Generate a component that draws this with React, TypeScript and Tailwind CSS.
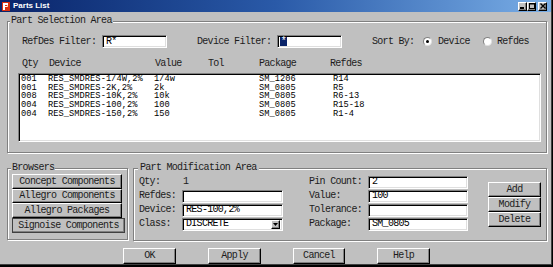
import React from "react";

const raised =
  "bg-[#c0c0c0] border border-t-white border-l-white border-b-black border-r-black shadow-[inset_-1px_-1px_0_#808080]";
const sunken =
  "bg-white border border-t-[#808080] border-l-[#808080] border-b-white border-r-white shadow-[inset_1px_1px_0_#000,inset_-1px_-1px_0_#dfdfdf]";
const etched = "border border-[#808080] shadow-[inset_1px_1px_0_#fff,1px_1px_0_#fff]";

const parts = [
  ["001", "RES_SMDRES-1/4W,2%", "1/4w", "SM_1206", "R14"],
  ["001", "RES_SMDRES-2K,2%", "2k", "SM_0805", "R5"],
  ["008", "RES_SMDRES-10K,2%", "10k", "SM_0805", "R6-13"],
  ["004", "RES_SMDRES-100,2%", "100", "SM_0805", "R15-18"],
  ["004", "RES_SMDRES-150,2%", "150", "SM_0805", "R1-4"]
];

function TitleButton({ children }: { children: React.ReactNode }) {
  return <div className={`${raised} w-[9px] h-[9px] flex items-center justify-center`}>{children}</div>;
}

function TitleBar() {
  return <div className="h-[12px] shrink-0 flex items-center bg-gradient-to-r from-[#0a246a] via-[#2a5aa8] to-[#7aaee6] pl-[2px] pr-[4px]">
      <svg width="8" height="9" viewBox="0 0 8 9" className="shrink-0">
        <rect x="0" y="0" width="8" height="9" fill="#d83010" />
        <rect x="1" y="1" width="2" height="7" fill="#fff" />
        <rect x="3" y="1" width="3" height="2" fill="#fff" />
        <rect x="5" y="3" width="1" height="2" fill="#ffd0a0" />
        <rect x="3" y="4" width="2" height="1" fill="#fff" />
      </svg>
      <span className="ml-[3px] font-['Liberation_Sans',Arial,sans-serif] text-[8px] font-bold tracking-normal text-white">
        Parts List
      </span>
      <div className="ml-auto flex items-center">
        <TitleButton>
          <svg width="5" height="5" viewBox="0 0 5 5"><rect x="0" y="3" width="4" height="2" fill="#000" /></svg>
        </TitleButton>
        <TitleButton>
          <svg width="6" height="6" viewBox="0 0 6 6"><rect x="0.5" y="0.5" width="5" height="5" fill="none" stroke="#000" /><rect x="0" y="0" width="6" height="1.5" fill="#000" /></svg>
        </TitleButton>
        <div className="ml-[2px]">
          <TitleButton>
            <svg width="6" height="6" viewBox="0 0 6 6"><path d="M0.5 0.5 L5.5 5.5 M5.5 0.5 L0.5 5.5" stroke="#000" strokeWidth="1.4" /></svg>
          </TitleButton>
        </div>
      </div>
    </div>;
}

function Radio({ checked }: { checked?: boolean }) {
  return <div className="w-[9px] h-[9px] shrink-0 rounded-full bg-white border border-t-[#808080] border-l-[#808080] border-b-[#dfdfdf] border-r-[#dfdfdf] flex items-center justify-center">
      {checked && <div className="w-[3px] h-[3px] rounded-full bg-black" />}
    </div>;
}

function Button({ label, className = "" }: { label: string; className?: string }) {
  return <div className={`${raised} flex items-center justify-center shrink-0 ${className}`}>{label}</div>;
}

function Field({ value, width, children }: { value?: string; width: string; children?: React.ReactNode }) {
  return <div className={`${sunken} ${width} h-[13px] shrink-0 flex items-center pl-[3px] text-black`}>
      {value}
      {children}
    </div>;
}

export default function App() {
  return <div className="w-[553px] h-[267px] bg-black font-['Liberation_Mono','Courier_New',monospace] text-[10px] tracking-[-0.7px] leading-none text-[#1c1c1c]">
      <div className="w-[552px] h-[265px] bg-[#c0c0c0] flex flex-col border-r border-b border-[#404040]">
        <TitleBar />
        <div className="flex flex-col pl-[7px]">
          {/* Part selection */}
          <fieldset className={`${etched} mt-[3px] w-[540px] h-[138px]`}>
            <legend className="ml-[2px] px-[1px] bg-[#c0c0c0] leading-[12px]">Part Selection Area</legend>
            <div className="flex items-center h-[13px] mt-[8px] pl-[14px]">
              <span className="w-[80px] shrink-0">RefDes Filter:</span>
              <Field value="R*" width="w-[65px]" />
              <span className="ml-[30px] w-[80px] shrink-0">Device Filter:</span>
              <div className={`${sunken} w-[65px] h-[13px] shrink-0 flex items-center pl-[2px]`}>
                <span className="bg-[#0a246a] text-white h-[9px] w-[7px] flex items-center justify-center">*</span>
              </div>
              <span className="ml-[30px] w-[51px] shrink-0">Sort By:</span>
              <Radio checked />
              <span className="ml-[6px] w-[45px] shrink-0">Device</span>
              <Radio />
              <span className="ml-[5px]">Refdes</span>
            </div>
            <div className="flex items-center h-[10px] mt-[11px] pl-[14px]">
              <span className="w-[27px] shrink-0">Qty</span>
              <span className="w-[106px] shrink-0">Device</span>
              <span className="w-[53px] shrink-0">Value</span>
              <span className="w-[51px] shrink-0">Tol</span>
              <span className="w-[71px] shrink-0">Package</span>
              <span>Refdes</span>
            </div>
            <div className={`${sunken} ml-[10px] mt-[4px] w-[523px] h-[69px] pt-[1px] pl-[2px] text-black text-[8.7px] tracking-[0.05px]`}>
              {parts.map((p, i) => <div key={i} className="flex items-center h-[8.7px]">
                  <span className="w-[27px] shrink-0">{p[0]}</span>
                  <span className="w-[106px] shrink-0">{p[1]}</span>
                  <span className="w-[105px] shrink-0">{p[2]}</span>
                  <span className="w-[74px] shrink-0">{p[3]}</span>
                  <span>{p[4]}</span>
                </div>)}
            </div>
          </fieldset>

          {/* Lower area */}
          <div className="flex mt-[9px]">
            <fieldset className={`${etched} w-[121px] h-[78px]`}>
              <legend className="ml-[3px] px-[1px] bg-[#c0c0c0] leading-[12px]">Browsers</legend>
              <div className="flex flex-col pl-[4px]">
                <Button label="Concept Components" className="w-[110px] h-[15px]" />
                <Button label="Allegro Components" className="w-[110px] h-[14px]" />
                <Button label="Allegro Packages" className="w-[110px] h-[15px]" />
                <Button label="Signoise Components" className="w-[113px] h-[15px] outline outline-1 outline-[#404040] -outline-offset-1" />
              </div>
            </fieldset>

            <fieldset className={`${etched} ml-[5px] w-[414px] h-[79px]`}>
              <legend className="ml-[4px] px-[2px] bg-[#c0c0c0] leading-[12px]">Part Modification Area</legend>
              <div className="flex pl-[5px]">
                <div className="flex flex-col mt-[1px]">
                  <div className="flex items-center h-[14px]">
                    <span className="w-[43px] shrink-0">Qty:</span>
                    <span className="pl-[1px]">1</span>
                  </div>
                  <div className="flex items-center h-[14px]">
                    <span className="w-[43px] shrink-0">Refdes:</span>
                    <Field width="w-[101px]" />
                  </div>
                  <div className="flex items-center h-[14px]">
                    <span className="w-[43px] shrink-0">Device:</span>
                    <Field value="RES-100,2%" width="w-[101px]" />
                  </div>
                  <div className="flex items-center h-[14px]">
                    <span className="w-[43px] shrink-0">Class:</span>
                    <div className={`${sunken} w-[101px] h-[13px] shrink-0 flex items-center pl-[3px] pr-[2px] text-black`}>
                      DISCRETE
                      <div className={`${raised} ml-auto w-[9px] h-[9px] flex items-center justify-center`}>
                        <svg width="5" height="3" viewBox="0 0 5 3"><path d="M0 0 H5 L2.5 3 Z" fill="#000" /></svg>
                      </div>
                    </div>
                  </div>
                </div>

                <div className="flex flex-col ml-[26px] mt-[1px]">
                  <div className="flex items-center h-[14px]">
                    <span className="w-[59px] shrink-0">Pin Count:</span>
                    <Field value="2" width="w-[100px]" />
                  </div>
                  <div className="flex items-center h-[14px]">
                    <span className="w-[59px] shrink-0">Value:</span>
                    <Field value="100" width="w-[100px]" />
                  </div>
                  <div className="flex items-center h-[14px]">
                    <span className="w-[59px] shrink-0">Tolerance:</span>
                    <Field width="w-[100px]" />
                  </div>
                  <div className="flex items-center h-[14px]">
                    <span className="w-[59px] shrink-0">Package:</span>
                    <Field value="SM_0805" width="w-[100px]" />
                  </div>
                </div>

                <div className="flex flex-col ml-[20px] mt-[8px]">
                  <Button label="Add" className="w-[53px] h-[15px]" />
                  <Button label="Modify" className="w-[53px] h-[15px]" />
                  <Button label="Delete" className="w-[53px] h-[15px]" />
                </div>
              </div>
            </fieldset>
          </div>
        </div>

        <div className="flex pl-[123px] gap-[32px] mt-[7px]">
          <Button label="OK" className="w-[53px] h-[16px]" />
          <Button label="Apply" className="w-[53px] h-[16px]" />
          <Button label="Cancel" className="w-[52px] h-[16px]" />
          <Button label="Help" className="w-[53px] h-[16px]" />
        </div>
      </div>
    </div>;
}
